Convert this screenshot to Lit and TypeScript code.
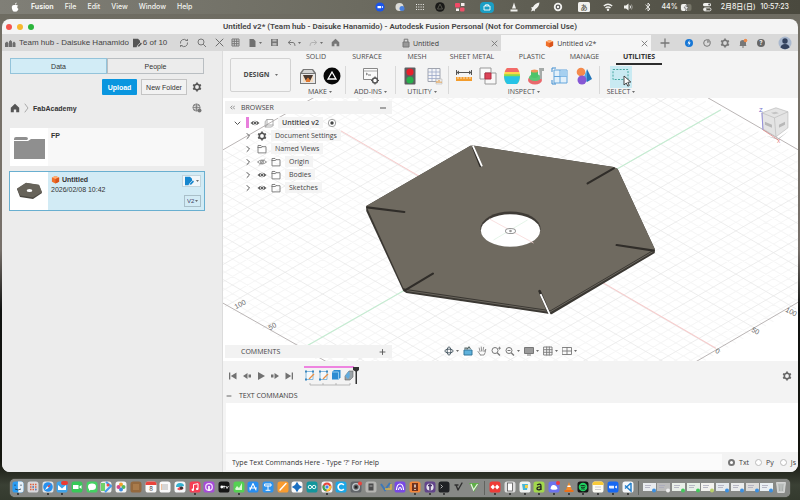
import { LitElement, html, svg, css, SVGTemplateResult } from "lit";
import { customElement, property } from "lit/decorators.js";
import { classMap } from "lit/directives/class-map.js";

type Art = SVGTemplateResult;
const icon = (art: Art, w = 10, h = w, box = `0 0 ${w} ${h}`) =>
  html`<svg width=${w} height=${h} viewBox=${box} aria-hidden="true">${art}</svg>`;

const line = (d: string, color = "#6d6d6d", w = 1) =>
  svg`<path d=${d} fill="none" stroke=${color} stroke-width=${w} stroke-linecap="round" stroke-linejoin="round"/>`;
const fill = (d: string, color = "#6d6d6d") => svg`<path d=${d} fill=${color}/>`;
const caret = svg`<path d="M0 0h3L1.500 2z" fill="#6d6d6d"/>`;

const gear = (c = "#555") => svg`
  <circle cx="5" cy="5" r="2.700" fill="none" stroke=${c} stroke-width="1.600"/>
  <path d="M5 .5v1.500M5 8v1.500M1.100 2.750l1.300.75M7.600 6.500l1.300.75M1.100 7.250l1.300-.75M7.600 3.500l1.300-.75" stroke=${c} stroke-width="1.700"/>`;
const eye = svg`<path d="M.5 5Q5 .5 9.500 5Q5 9.500 .5 5z" fill="#5c5c5c"/><circle cx="5" cy="5" r="1.900" fill="#fff"/><circle cx="5" cy="5" r="1.200" fill="#5c5c5c"/>`;
const eyeOff = svg`<path d="M.5 5Q5 1 9.500 5Q5 9 .5 5z" fill="none" stroke="#8a8a8a" stroke-width=".9"/><circle cx="5" cy="5" r="1.400" fill="none" stroke="#8a8a8a"/><path d="M2 8.500L8 1.500" stroke="#8a8a8a" stroke-width=".7"/>`;
const folderOutline = line("M1 8.500V1.500h3l1 1.200h4v5.800zM1 3.500h3.500l.8-.8", "#777", 0.9);
const home = (c = "#555") => fill("M5 .8L.8 4.700V9.300h3V6.500h2.400v2.800h3V4.700z", c);
const cube = svg`<path d="M1 2.800L5 1l4 1.800v4.700L5 9.500 1 7.500z" fill="#f0702a"/><path d="M1 2.800L5 4.500l4-1.700L5 1z" fill="#ffae72"/><path d="M5 4.500v5l4-2V2.800z" fill="#d9531b"/>`;
const edit = (c: string) => svg`<path d="M1 .8h5l2 2v2L5 8 4.600 9.300H1z" fill=${c}/><path d="M5.500 9.200l.4-1.900 3-3 1.400 1.400-3 3z" fill=${c} stroke="#eee" stroke-width=".5"/>`;

/* ---------- drawing area ---------- */
const O = [511, 230], U = [37.5, 21.7], V = [37.5, -21.4];
const at = (u: number, v: number) => `${O[0] + u * U[0] + v * V[0]} ${O[1] + u * U[1] + v * V[1]}`;
const gridLines = () => {
  const minor: string[] = [], major: string[] = [];
  for (let i = -27; i <= 27; i++) {
    const k = i / 5, set = i % 5 === 0 ? major : minor;
    set.push(`M${at(k, -5.6)}L${at(k, 5.6)}M${at(-5.6, k)}L${at(5.6, k)}`);
  }
  return svg`<path d=${minor.join("")} stroke="#f6f6f6" fill="none"/>
    <path d=${major.join("")} stroke="#e9e9e9" stroke-width=".8" fill="none"/>`;
};
const scene = svg`
  ${gridLines()}
  <g fill="none" stroke="#a9a3a3" stroke-width=".8">
    <path d="M224 303L330 363M690 365L800 301M708 98L800 151M224 150L316 97"/>
  </g>
  <path d="M340 130L716 348" stroke="#f6cccc"/><path d="M300 350L721 110" stroke="#c3ecd0"/>
  <g font-family="Liberation Sans, sans-serif" font-size="7" fill="#666">
    <text transform="translate(237 309) rotate(-28)">100</text>
    <text transform="translate(271 330) rotate(-28)">50</text>
    <text transform="translate(715 352) rotate(28)">0</text>
    <text transform="translate(751 331) rotate(28)">50</text>
    <text transform="translate(785 311) rotate(28)">100</text>
  </g>
  <path d="M367 206L471 146L475 146L614 167L618 169L655 249V253L552 314L407 293L404 291L367 211z" fill="#3a3732"/>
  <path d="M367 206L471 146L475 146L614 167L618 169L655 249L551 310L407 289L404 288z" fill="#6f6a60"/>
  <path d="M407 290.500L551 311.500L655 250.500" stroke="#8a857b" stroke-width=".6" fill="none"/>
  <ellipse cx="511" cy="229" rx="30" ry="17.500" fill="#3f3b36"/>
  <ellipse cx="511" cy="230.500" rx="29.600" ry="16.200" fill="#fff"/>
  <path d="M490 219L534 243" stroke="#f8d8d8" stroke-width=".8"/><path d="M494 240L528 220" stroke="#dff3e4" stroke-width=".8"/>
  <ellipse cx="511" cy="231" rx="5" ry="2.600" fill="#fff" stroke="#999"/><circle cx="511" cy="231" r="1.300" fill="#999"/>
  <g stroke-linecap="round" stroke="#302d29" stroke-width="2.200">
    <path d="M368 207.500L405 212M588 183.500L614 168.500M617 245L654 250.500M406 290L433.500 273.500"/>
    <path d="M474 148L481 166M540 291L549 312" stroke-width="2.600"/>
  </g>
  <path d="M473.500 146L482.500 166.500M541 294L550 314" stroke="#fff" stroke-width="1.800"/>
  <g>
    <path d="M766 136L778 140L789 131L778 139z" fill="#bbb"/>
    <path d="M762 113L776 108L788 112L788 128L776 137L763 129z" fill="#e4e4e4" stroke="#b5b5b5" stroke-width=".6"/>
    <path d="M762 113L774.500 118L788 112M774.500 118L776 137" stroke="#b5b5b5" fill="none" stroke-width=".6"/>
    <path d="M765 122l7 3v3l-7-3zM779 125l6-3v3l-6 3z" fill="#b8b8b8"/><path d="M771 113l5-1 3 1.500-5 1z" fill="#c4c4c4"/>
    <path d="M762 113L763 130" stroke="#8480dd" stroke-width=".8"/><path d="M763 130L778 140" stroke="#e08888" stroke-width=".8"/>
    <text x="759" y="112" font-size="6" fill="#7470cc" font-family="Liberation Sans, sans-serif">Z</text>
    <text x="777" y="143" font-size="5" fill="#dd7777" font-family="Liberation Sans, sans-serif">X</text>
  </g>`;

/* ---------- ribbon ---------- */
const tools = {
  print: svg`<path d="M1 6l3-4h10l3 4v11H1z" fill="#777"/><path d="M3 6l2-3h8l2 3z" fill="#d5d5d5"/><path d="M2 7h14v9H2z" fill="#e8e8e8"/><path d="M4 8h10v7H4z" fill="#4a3a32"/><path d="M4 8l3 6 2-3 2 3 3-6v7H4z" fill="#f6dcc0"/><path d="M7 13l2-2.500L11 13v2H7z" fill="#e07830"/>`,
  tri: svg`<circle cx="9" cy="9" r="8.500" fill="#080808"/><path d="M9 5l4 7H5z" fill="none" stroke="#fff" stroke-width="1.300"/>`,
  script: svg`<path d="M1.500 1.500h14v11h-14z" fill="#fafafa" stroke="#888"/><path d="M2 4h13" stroke="#aaa"/><path d="M4 6l1.500 1L4 8M6 8h3" stroke="#555" fill="none" stroke-width=".8"/><circle cx="13" cy="13.500" r="2.500" fill="#fff" stroke="#555" stroke-width="1.500"/><path d="M13 9.500v1.500M13 16v1.500M9 13.500h1.500M15.500 13.500h1.500" stroke="#555" stroke-width="1.200"/>`,
  light: svg`<rect x="3.500" y=".5" width="11" height="17" rx="1" fill="#5c5e60"/><circle cx="9" cy="5" r="3.600" fill="#e8202c"/><circle cx="9" cy="13" r="3.600" fill="#28b04c"/>`,
  sheet: svg`<path d="M3 1.500h12v13H3z" fill="#f4f5f8" stroke="#a0a4ae"/><path d="M3 5h12M3 8.500h12M3 11.500h12M7 2v12M11 2v12" stroke="#9ca8c8" stroke-width=".8"/><path d="M11 12h6v5h-6z" fill="#eee" stroke="#bbb" stroke-width=".6"/><path d="M12 16v-2M14 16v-3M16 16v-1.500" stroke="#e09030"/>`,
  measure: svg`<path d="M1.500 3v5M16.500 3v5M2 5.500h14" stroke="#555" fill="none"/><path d="M4 3.500L1.500 5.500 4 7.500zM14 3.500l2.500 2L14 7.500z" fill="#555"/><path d="M1 10h16v4H1z" fill="#f39c2c"/><path d="M3 10v2M6 10v2M9 10v2M12 10v2M15 10v2" stroke="#fff" stroke-width=".7"/>`,
  interfere: svg`<path d="M1 1h11v11H1z" fill="#fafafa" stroke="#999"/><path d="M6 6h11v11H6z" fill="#f8f8f8" stroke="#999"/><path d="M6 6h6v6H6z" fill="#dc4458" stroke="#b52e42"/>`,
  zebra: svg`<path d="M4 1h10q3 3 3 8t-3 8H4Q1 14 1 9t3-8z" fill="#ffd64a"/><path d="M4 1h10q1.500 1.500 2.200 4H1.800Q2.500 2.500 4 1z" fill="#f26a6a"/><path d="M1 9h16q0 5-3 8H4Q1 14 1 9z" fill="#27c3e6"/><path d="M1.200 7.300h15.600v1.900H1.200z" fill="#8adc4a"/>`,
  curv: svg`<ellipse cx="8" cy="13" rx="7" ry="4.500" fill="#e9686c"/><ellipse cx="8" cy="10.500" rx="6" ry="3.500" fill="#58c878"/><path d="M4 4q4-2 7 0v6q-3 2-7 0z" fill="#4cc46a"/><ellipse cx="7.500" cy="4" rx="3.500" ry="1.500" fill="#f0955a"/><path d="M12 1h5v3h-2v8h-2z" fill="#a5aaa8"/>`,
  section: svg`<path d="M3 3h13v13H3z" fill="#e2f0fa" stroke="#62a5dc"/><path d="M9 3v13M3 9.500h13" stroke="#62a5dc"/><path d="M9.500 3.500H16v6H9.500z" fill="#a6d0f0"/><path d="M1 5V1h4M1 13v4h4" stroke="#3c8cd0" fill="none"/>`,
  shapes: svg`<path d="M12 2l5 10-5 3z" fill="#2374b8"/><path d="M12 2L8 12l4 3z" fill="#53a8e4"/><circle cx="6" cy="5" r="4.300" fill="#f48a4c"/><circle cx="7" cy="13" r="4.500" fill="#8658d4"/>`,
  select: svg`<path d="M3 3.500h15v10H3z" fill="none" stroke="#46a8a2" stroke-dasharray="2 1.300"/><path d="M14 10v9l2.300-2 1.500 3.200 1.500-.7-1.500-3.200 3-.3z" fill="#fff" stroke="#333" stroke-width=".9"/>`,
};
const groups: { label: string; cls: string; items: [string, Art][] }[] = [
  { label: "MAKE", cls: "make", items: [["3D Print", tools.print], ["Make add-in", tools.tri]] },
  { label: "ADD-INS", cls: "addins", items: [["Scripts and Add-Ins", tools.script]] },
  { label: "UTILITY", cls: "utility", items: [["Status", tools.light], ["Parameters", tools.sheet]] },
  { label: "INSPECT", cls: "inspect", items: [["Measure", tools.measure], ["Interference", tools.interfere], ["Zebra", tools.zebra], ["Curvature", tools.curv], ["Section", tools.section], ["Color", tools.shapes]] },
];

@customElement("fusion-ribbon")
class FusionRibbon extends LitElement {
  static styles = css`
    :host { display: flex; background: #f4f4f4; height: 47px; padding-left: 7px; overflow: hidden; font: 7px/8px "Open Sans", "Noto Sans", sans-serif; color: #4a4a4a; }
    button { font: inherit; color: inherit; background: none; border: 0; padding: 0; white-space: nowrap; }
    svg { display: block; }
    .design { align-self: center; width: 61px; height: 34px; border: 1px solid #d2d2d2; border-radius: 2px; font-weight: 700; display: flex; align-items: center; justify-content: center; gap: 5px; flex: none; }
    .right { display: flex; flex-direction: column; margin-left: 4px; }
    nav { display: flex; height: 15px; }
    nav button { height: 12px; text-align: center; }
    .solid { width: 42px; } .surface { width: 60px; } .mesh { width: 40px; } .metal { width: 70px; }
    .plastic { width: 50px; } .manage { width: 55px; }
    .util { width: 46px; height: 14px; margin-left: 4px; border-bottom: 2px solid #2c2c2c; font-weight: 700; color: #333; }
    .groups { display: flex; }
    .group { display: flex; flex-direction: column; align-items: center; border-right: 1px solid #d9d9d9; height: 28px; }
    .tools { display: flex; gap: 6px; height: 18px; padding: 1px 0 3px; justify-content: center; }
    .make { width: 50px; } .addins { width: 49px; } .utility { width: 52px; } .inspect { width: 150px; } .select { width: 42px; border: 0; }
    .label { display: flex; align-items: center; gap: 2px; }
    .pick { background: #c9eaf2; width: 22px; height: 22px; }
  `;
  render() {
    const tabs = [["SOLID", "solid"], ["SURFACE", "surface"], ["MESH", "mesh"], ["SHEET METAL", "metal"], ["PLASTIC", "plastic"], ["MANAGE", "manage"], ["UTILITIES", "util"]];
    return html`
      <button class="design">DESIGN ${icon(caret, 3, 2)}</button>
      <div class="right">
        <nav>${tabs.map(([t, c]) => html`<button class=${c}>${t}</button>`)}</nav>
        <div class="groups">
          ${groups.map((g) => html`<div class="group ${g.cls}">
            <div class="tools">${g.items.map(([n, a]) => html`<button aria-label=${n}>${icon(a, 18)}</button>`)}</div>
            <button class="label">${g.label} ${icon(caret, 3, 2)}</button>
          </div>`)}
          <div class="group select">
            <button class="pick" aria-label="Select">${icon(tools.select, 22)}</button>
            <button class="label">SELECT ${icon(caret, 3, 2)}</button>
          </div>
        </div>
      </div>`;
  }
}

/* ---------- data panel ---------- */
@customElement("data-panel")
class DataPanel extends LitElement {
  static styles = css`
    :host { display: block; flex: 0 0 221px; box-sizing: border-box; background: #ececec; padding: 7px 18px 0 8px; border-right: 1px solid #dcdcdc; font: 7px/9px "Liberation Sans", Arial, sans-serif; color: #333; }
    button, select { font: inherit; color: inherit; background: none; border: 0; padding: 0; }
    svg { display: block; }
    .tabs { display: grid; grid-template-columns: 1fr 1fr; height: 16px; }
    .tabs button { border: 1px solid #b9bec2; }
    .tabs .on { background: #d2ecf6; border-color: #93c3da; }
    .actions { display: flex; justify-content: flex-end; align-items: center; gap: 4px; height: 16px; margin-top: 5px; }
    .upload { background: #0a96df; color: #fff; font-weight: 700; width: 35px; height: 16px; border-radius: 1px; }
    .new { border: 1px solid #c4c4c4; width: 46px; height: 16px; background: #f2f2f2; }
    .gear { padding: 0 2px 0 1px; }
    .path { display: flex; align-items: center; gap: 4px; height: 10px; margin: 8px 2px 15px 0; }
    .path a { color: #333; text-decoration: none; font-weight: 700; }
    .globe { margin-left: auto; }
    .card { display: flex; background: #f8f8f8; height: 38px; margin-bottom: 6px; }
    .thumb { background: #fff; width: 38px; display: grid; place-items: center; }
    .body { flex: 1; padding: 2px 3px; display: flex; justify-content: space-between; }
    .name { display: flex; align-items: center; gap: 2px; font-weight: 700; height: 10px; }
    .date { margin-top: 1px; }
    .sel { background: #d2ebf5; box-shadow: 0 0 0 1px #69afd0; }
    .side { display: flex; flex-direction: column; justify-content: space-between; align-items: flex-end; padding: 1px 0; }
    .ed { width: 19px; height: 12px; background: #f1f7fa; border: 1px solid #c3d5dd; display: flex; align-items: center; justify-content: center; gap: 2px; }
    .ver { width: 15px; height: 10px; border: 1px solid #a9bfc9; display: flex; align-items: center; justify-content: center; color: #446; font-size: 6px; }
    .ver select { appearance: none; }
  `;
  render() {
    return html`
      <div class="tabs"><button class="on">Data</button><button>People</button></div>
      <div class="actions"><button class="upload">Upload</button><button class="new">New Folder</button>
        <button class="gear" aria-label="Settings">${icon(gear())}</button></div>
      <div class="path"><a href="#home" aria-label="Home">${icon(home())}</a>${icon(line("M1 1l3 4-3 4", "#aaa"), 5, 10)}
        <a href="#fab">FabAcademy</a>
        <span class="globe">${icon(svg`<circle cx="4.500" cy="4.500" r="3.600" fill="none" stroke="#777" stroke-width=".9"/><path d="M1 4.500h7M4.500 1v7M2 2.500q2.500 1.500 5 0M2 6.500q2.500-1.500 5 0" stroke="#777" fill="none" stroke-width=".8"/><circle cx="7.500" cy="7.500" r="2" fill="#777"/>`)}</span></div>
      <div class="card"><div class="thumb">${icon(fill("M0 3q0-2 2-2h10q2 0 2 2l-1 1H0zM0 5h14l3-2h14v20H0z", "#8f8f8f"), 31, 23)}</div>
        <div class="body"><span class="name">FP</span></div></div>
      <div class="card sel"><div class="thumb">${icon(svg`<path d="M1 7L10 1l13 2 3 8-9 6-13-2z" fill="#4b4842"/><path d="M1 6.500L10 .8l13 2 3 7.200-9 5.500-13-2z" fill="#67635a"/><ellipse cx="13.500" cy="8.500" rx="2.800" ry="1.600" fill="#fff"/>`, 27, 18)}</div>
        <div class="body"><div><span class="name">${icon(cube, 9, 9, "0 0 10 10")}Untitled</span><div class="date">2026/02/08 10:42</div></div>
          <div class="side"><button class="ed" aria-label="Open for edit">${icon(edit("#1687cf"), 10)}${icon(caret, 3, 2)}</button>
            <label class="ver"><select aria-label="Version"><option>V2</option></select>${icon(caret, 3, 2)}</label></div>
        </div></div>`;
  }
}

/* ---------- viewport ---------- */
@customElement("model-view")
class ModelView extends LitElement {
  static styles = css`
    :host { display: block; position: relative; flex: 1; min-height: 200px; background: #fff; overflow: hidden; font: 7px/9px "Open Sans", "Noto Sans", sans-serif; color: #444; }
    svg { display: block; }
    button { font: inherit; color: inherit; background: none; border: 0; padding: 0; display: block; }
    .scene { position: absolute; inset: 0; width: 100%; height: 100%; }
    .browser { position: absolute; left: 2px; top: 3px; width: 167px; }
    .comments { position: absolute; left: 2px; bottom: 3px; width: 167px; }
    .bar { display: flex; align-items: center; background: #f2f2f2; height: 13px; padding: 0 6px 0 5px; box-sizing: border-box; gap: 6px; }
    .bar span { flex: 1; } .comments .bar { padding-left: 16px; }
    ul { list-style: none; margin: 2px 0 0; padding: 0 0 0 8px; display: grid; grid-auto-rows: 13px; }
    li { display: flex; align-items: center; gap: 4px; }
    li + li { padding-left: 10px; }
    .vis { display: flex; align-items: center; gap: 1px; }
    .name { background: #f4f4f4; padding: 0 4px; height: 11px; line-height: 11px; }
    b.name { font-weight: 600; }
    .pink { width: 3px; height: 11px; background: #e87fdc; }
    .nav { position: absolute; left: 0; right: 0; bottom: 5px; width: fit-content; margin: 0 auto; display: flex; align-items: center; gap: 4px; background: #fafafa; height: 11px; }
    .drop { display: flex; align-items: center; gap: 2px; }
  `;
  render() {
    const rows: [Art[], string][] = [
      [[gear("#555")], "Document Settings"], [[folderOutline], "Named Views"],
      [[eyeOff, folderOutline], "Origin"], [[eye, folderOutline], "Bodies"], [[eye, folderOutline], "Sketches"]];
    const drop = (label: string, a: Art) => html`<button class="drop" aria-label=${label}>${icon(a)}${icon(caret, 3, 2)}</button>`;
    const mag = svg`<circle cx="4" cy="4.500" r="3" fill="none" stroke="#777"/><path d="M6.200 6.700L9 9.500" stroke="#777" stroke-width="1.300"/>`;
    return html`
      <svg class="scene" viewBox="224 98 574 263" preserveAspectRatio="xMidYMid slice" role="img" aria-label="Hexagonal plate">${scene}</svg>
      <section class="browser">
        <div class="bar">${icon(line("M2 1L.7 2.500 2 4M4.500 1L3.200 2.500 4.500 4", "#777", 0.8), 5)}<span>BROWSER</span><button aria-label="Collapse">${icon(line("M0 4h6", "#555"), 6, 8)}</button></div>
        <ul>
          <li>${icon(line("M2 4l2.500 2.500L7 4", "#555"), 9, 10)}<span class="vis"><i class="pink"></i>${icon(eye)}</span>${icon(line("M1.500 3l1.500-1.500h6v6L7.500 9h-6zM3 1.500v5.500h6M3 7L1.500 9", "#999", 0.8))}<b class="name">Untitled v2</b>${icon(svg`<circle cx="5" cy="5" r="3.700" fill="#fff" stroke="#888" stroke-width=".8"/><circle cx="5" cy="5" r="1.700" fill="#444"/>`)}</li>
          ${rows.map(([a, n]) => html`<li>${icon(line("M4 2.500L6.500 5 4 7.500", "#555"))}${a.map((x) => icon(x))}<span class="name">${n}</span></li>`)}
        </ul>
      </section>
      <section class="comments"><div class="bar"><span>COMMENTS</span><button aria-label="Add comment">${icon(line("M1 4h5M3.500 1.500v5", "#555", 0.9), 7, 8)}</button></div></section>
      <div class="nav">
        ${drop("Orbit", svg`<ellipse cx="5" cy="5" rx="4.200" ry="1.900" fill="none" stroke="#51606a"/><ellipse cx="5" cy="5" rx="1.900" ry="4.200" fill="none" stroke="#51606a"/>`)}
        <button aria-label="Look at">${icon(svg`<path d="M1 4h8v5H1z" fill="#5fb2dc" stroke="#33769b"/><path d="M2 3.500V2h2v1.500M4.500 3l1.500-2 1.500 2" fill="none" stroke="#566" stroke-width="1.100"/>`)}</button>
        <button aria-label="Pan">${icon(line("M3.500 9L1 5.500M3 5.500L2.200 2M4.500 5L4.300 1M6 5l.6-3.700M7 5.700L8.800 3Q8.500 7 7 9H3.500", "#888", 0.9))}</button>
        <button aria-label="Zoom">${icon(svg`${mag}<path d="M7 2.200h3M8.500.7v3" stroke="#777" stroke-width=".8"/>`)}</button>
        ${drop("Fit", svg`${mag}<path d="M2.500 4.500h3" stroke="#777"/>`)}
        ${drop("Display", svg`<path d="M.5 1.500h9v6h-9z" fill="#9a9a9a" stroke="#777"/><path d="M3 9h4" stroke="#777"/>`)}
        ${drop("Grid", line("M1 1h8v8H1zM1 3.700h8M1 6.300h8M3.700 1v8M6.300 1v8", "#777", 0.9))}
        ${drop("Viewports", line("M.5 1.500h9v7h-9zM.5 5h9M5 1.500v7", "#777", 0.9))}
      </div>`;
  }
}

/* ---------- dock ---------- */
const g = {
  dots: (c: string) => svg`<path d="M3 3.500h1.500M5.500 3.500h1.500M8 3.500h1.500M3 6h1.500M5.500 6h1.500M8 6h1.500M3 8.500h1.500M5.500 8.500h1.500M8 8.500h1.500" stroke=${c} stroke-width="1.500"/>`,
  ring: (c: string) => svg`<circle cx="6" cy="6" r="3.300" fill="none" stroke=${c} stroke-width="1.300"/>`,
  disc: (c: string) => svg`<circle cx="6" cy="6" r="3.600" fill=${c}/>`,
  lines: (c: string) => svg`<path d="M3 4h6M3 6h6M3 8h6" stroke=${c} stroke-width=".9"/>`,
};
const apps: [string, Art, boolean?][] = [
  ["#2b9cf2", svg`<path d="M6 .5h3q2.500 0 2.500 2.500v6q0 2.500-2.500 2.500H6.500Q5.500 8 6 .5z" fill="#e6f0f8"/><path d="M3 3.500v1.500M9 3.500v1.500M3 8q3 2 6 0" stroke="#234" fill="none" stroke-width=".8"/>`, true],
  ["#d8d8dc", svg`${g.dots("#e0603c")}<path d="M5.500 6H7M8 8.500h1.500" stroke="#3c8ce0" stroke-width="1.500"/>`],
  ["#dfe6ec", svg`<circle cx="6" cy="6" r="4.800" fill="#2690ee"/><path d="M9 3L6.800 6.800 5.200 5.200z" fill="#e44"/><path d="M3 9l2.200-3.800 1.600 1.600z" fill="#fff"/>`, true],
  ["#3fa4ea", svg`<path d="M2 4l4 3.500L10 4v5H2z" fill="#fff"/><rect x="5" y="0" width="7" height="4" rx="2" fill="#ea3a33"/>`, true],
  ["#38c858", fill("M2 4h5.500v4H2zM8 6l2.500-2v4z", "#fff")],
  ["#44d162", svg`<ellipse cx="6" cy="5.700" rx="4" ry="3.200" fill="#fff"/><path d="M3 7.500v2.200L5.500 8.500z" fill="#fff"/>`],
  ["#eceff0", svg`<path d="M1 2h4v8H1z" fill="#6ed26a"/><path d="M6 1l5 4-6 6" stroke="#459cf0" stroke-width="2" fill="none"/><circle cx="8" cy="4" r="1.500" fill="#eb5048"/>`],
  ["#f6f6f6", svg`<circle cx="6" cy="3.500" r="2" fill="#f3a02c"/><circle cx="8.500" cy="6" r="2" fill="#58b85a"/><circle cx="6" cy="8.500" r="2" fill="#3a8ce0"/><circle cx="3.500" cy="6" r="2" fill="#d3488c"/>`],
  ["#94693e", svg`<path d="M3 3h6v6H3z" fill="#a97b4b"/>`],
  ["#fafafa", svg`<path d="M.5 3q0-2.500 2.500-2.500h6q2.500 0 2.500 2.500v1H.5z" fill="#e8443c"/><text x="6" y="10" text-anchor="middle" font-size="6" font-family="Inter, sans-serif" fill="#333">8</text>`],
  ["#fafafa", svg`${g.lines("#aaa")}<path d="M2.500 3.500v5" stroke="#e8863a" stroke-dasharray="1 1"/>`],
  ["#f5f8fa", svg`<path d="M2 6q0-4 4-4t4 3l-4 1z" fill="#35b1d0"/><path d="M3 8q3 3 7-1L6 5.500z" fill="#e8545c"/><circle cx="7.500" cy="7" r="1.600" fill="#333"/>`],
  ["#f53e55", svg`<path d="M4.500 8.500V3.500L9 2.700v5" stroke="#fff" fill="none"/><circle cx="3.800" cy="8.700" r="1.200" fill="#fff"/><circle cx="8.200" cy="7.900" r="1.200" fill="#fff"/>`, true],
  ["#a64bd8", svg`${g.ring("#f2defc")}<path d="M6 5v5" stroke="#fff" stroke-width="1.700"/>`],
  ["#151515", svg`<circle cx="3.800" cy="6" r="1.400" fill="#fff"/><path d="M6 4.500v3M5 5.500h2.500M8 5l1 2.500L10.500 5" stroke="#fff" fill="none" stroke-width=".8"/>`],
  ["#55d052", svg`<path d="M2 8l2-3 2 2 3-5v7H3z" fill="#d9fad3"/>`, true],
  ["#268df0", line("M6 2.500L3 9M6 2.500L9 9M2.500 7h7", "#fff", 1.1)],
  ["#2c93ee", line("M3 3h6v2H3zM6 5v4M4 9.300h4", "#fff", 1)],
  ["#f89b30", line("M3 9L9 2.500", "#fff", 1.4)],
  ["#fbfbfb", svg`<path d="M6 .8L8 4l3.200 2L8 8 6 11.200 4 8 .8 6 4 4z" fill="#1a6fc0"/>`],
  ["#13969c", svg`<circle cx="3.900" cy="6" r="1.700" fill="none" stroke="#e6fbfb"/><circle cx="8.100" cy="6" r="1.700" fill="none" stroke="#e6fbfb"/>`],
  ["#f4f4f4", svg`<circle cx="6" cy="6" r="4.500" fill="#e8473c"/><path d="M6 6L2 4a4.500 4.500 0 0 0 3.500 6.500z" fill="#38a852"/><path d="M6 6l-.5 4.500A4.500 4.500 0 0 0 10 4.500z" fill="#fbc52c"/><circle cx="6" cy="6" r="2" fill="#3f83ee" stroke="#fff" stroke-width=".7"/>`, true],
  ["#1ba7e6", svg`<path d="M8.800 4A3.200 3.200 0 1 0 8.800 8" stroke="#fff" fill="none" stroke-width="1.600"/>`],
  ["#606468", svg`${g.ring("#c2c7ca")}<circle cx="6" cy="6" r="1.500" fill="#222"/><circle cx="10" cy="2.500" r="2" fill="#e9443c"/>`],
  ["#b5b5b2", svg`<rect x="3.500" y="2.500" width="5" height="7" fill="#4b4b4b"/><path d="M4.500 5h3" stroke="#aaa"/>`],
  ["transparent", svg`<path d="M1 3l4 6 5-7" stroke="#3c78b8" stroke-width="2" fill="none"/><path d="M5 8h6V3" stroke="#d7b34a" stroke-width="1.500" fill="none"/>`],
  ["#7849e4", line("M2.500 8.500Q3 3 6 3t3.500 5.500M4.500 8.500Q6 4 7.500 8.500", "#fff", 1.2)],
  ["#f2863a", svg`<path d="M3 2h6v8H3z" fill="#70311c"/><path d="M6 3.500v3M6 8v1" stroke="#fff" stroke-width="1.300"/>`, true],
  ["#62458b", svg`${g.disc("#e9e5f0")}<path d="M6 2.500v7M4 4.500h4" stroke="#443066" stroke-width="1.500"/>`, true],
  ["#202225", line("M3 4l1.500 1.500L3 7", "#ddd", 0.8), true],
  ["transparent", line("M3 4l2 5 4-7M2 4h3", "#303030", 1.4)],
  ["transparent", svg`<path d="M1 2h10L6 11z" fill="#5fae48"/><path d="M3 3l2.500 6L9.500 3" stroke="#e8f4e4" stroke-width="1.300" fill="none"/>`],
];
const recent: [string, Art, boolean?][] = [
  ["#ee3b36", fill("M1.500 6L4 3.500 6 6 4 8.500zM6 6l2-2.500L10.500 6 8 8.500z", "#fff"), true],
  ["#dedede", svg`<rect x="3.500" y="2" width="5" height="8" fill="#fff" stroke="#555" stroke-width=".8"/>`, true],
  ["#eff3f2", svg`<path d="M3 3h6l-1 6H4z" fill="#49b6d6"/><path d="M6 4h3v3H6z" fill="#efcf4a"/>`, true],
  ["#a2d84c", svg`<path d="M4 4q4-2 4 1v4M8 6Q3.500 5.500 4 8q2 2 4-.5" stroke="#222" stroke-width="1.300" fill="none"/>`, true],
  ["#6b72ee", svg`<path d="M2.500 8Q3 3.500 6 4t3.500 4l-2 .8h-3z" fill="#fff"/><circle cx="10" cy="2" r="2" fill="#ee3a3f"/>`, true],
  ["transparent", svg`<path d="M6 1l3 8H3z" fill="#f48b26"/><path d="M4.700 4.500h2.600l.5 1.600H4.200z" fill="#fff"/><path d="M1.500 9h9v2h-9z" fill="#e7701c"/>`, true],
  ["#141414", svg`<circle cx="6" cy="6" r="4.300" fill="#20cf60"/><path d="M3.500 4.800q2.500-1 5 .3M4 6.500q2-.8 4 .3M4.300 8q1.700-.6 3.200.3" stroke="#111" fill="none" stroke-width=".8"/>`, true],
  ["#fbfbf4", svg`<path d="M.5 3q0-2.500 2.500-2.500h6q2.500 0 2.500 2.500v1H.5z" fill="#f8ca38"/><path d="M3 6h6M3 8.500h6" stroke="#ccc"/>`, true],
  ["#1768f2", svg`<path d="M2 4.800h5v2.800H3q-1 0-1-1zM8 5.500l2-1v3l-2-1z" fill="#e8f0ff"/>`, true],
  ["#f4f7fa", svg`<path d="M9 2v8L3 4.500M9 2L3 7.500" stroke="#2480cc" fill="none" stroke-width="1.500"/>`, true],
];
const minis = [["#e8ebee", "#3b8fe0"], ["#bcbcbc", "#eee"], ["#e9efe8", "#43c75c"], ["#e6efe7", "#43c75c"], ["#f2f2ee", "#b8d068"], ["#e4e9ed", "#3b8fe0"], ["#eaecec", "#3b8fe0"], ["#dddddb", "#3b8fe0"], ["#eaf0f4", "#3b8fe0"]];

@customElement("app-dock")
class AppDock extends LitElement {
  static styles = css`
    :host { display: flex; align-items: center; height: 18px; margin: 7px 10px 3px; padding: 0 1px; background: #878986; border-radius: 5px; box-shadow: 0 0 1px #b7b7b2; }
    button { flex: 1; background: none; border: 0; padding: 0; display: grid; justify-items: center; grid-template-rows: 12px 2px; }
    i { width: 1px; height: 14px; margin: 0 3px; background: #61635f; }
    svg { display: block; }
  `;
  render() {
    const app = ([bg, art, run]: [string, Art, boolean?]) => html`<button aria-label="App">${icon(svg`<rect x=".5" y=".5" width="11" height="11" rx="2.600" fill=${bg}/>${art}`, 12)}${run ? icon(svg`<circle cx="1" cy="1" r=".9" fill="#1d1d1d"/>`, 2) : ""}</button>`;
    return html`${apps.map(app)}<i></i>${recent.map(app)}<i></i>
      ${minis.map(([a, b]) => html`<button aria-label="Window">${icon(svg`<rect y="2" width="13" height="8" fill=${a}/><path d="M2 4.500h6M2 6.500h5" stroke="#aab" stroke-width=".8"/><circle cx="11" cy="9.500" r="2" fill=${b}/>`, 13, 12)}</button>`)}
      <button aria-label="Trash">${icon(svg`<path d="M1.500 1.500h9L9.300 11.500H2.700z" fill="#c9cccb" stroke="#e6e6e6" stroke-width=".7"/><path d="M4 3l.6 7M6 3v7M8 3l-.6 7" stroke="#9a9d9c" stroke-width=".7"/>`, 12)}</button>`;
  }
}

/* ---------- menu bar ---------- */
@customElement("menu-bar")
class MenuBar extends LitElement {
  static styles = css`
    :host { display: flex; align-items: center; height: 14px; padding: 0 11px 0 10px; color: #f4f4f0; font: 500 7px/10px Inter, "Noto Sans CJK JP", sans-serif; background: linear-gradient(90deg, #807f77, #6c6b60 45%, #4a493e); margin-bottom: 5px; white-space: nowrap; }
    svg { display: block; }
    nav { display: flex; gap: 11px; align-items: center; }
    button { font: inherit; color: inherit; background: none; border: 0; padding: 0; }
    .app { font-weight: 700; }
    .status { margin-left: auto; display: flex; gap: 8px; align-items: center; }
    .s { display: grid; place-items: center; width: 12px; }
    .w14 { width: 14px; } .w16 { width: 16px; } .w20 { width: 20px; } .w26 { width: 26px; }
    .bat { display: flex; align-items: center; gap: 2px; }
    .clock { display: flex; gap: 5px; }
  `;
  render() {
    const w = "#f1f1ee";
    const s = (a: Art, c = "") => html`<span class="s ${c}">${icon(a)}</span>`;
    return html`
      <nav><span>${icon(svg`<path d="M7 3.200Q6 2.600 5 3.100 3.800 2.600 2.700 3.300 1.200 4.500 2 7t2 2.700q1-.5 2 0 1.400-.2 2.500-2.800Q7 6 7.200 5T8.300 3.700Q7.800 3.200 7 3.200z" fill="#fff"/><path d="M5 2.700Q5 .9 6.700.5 6.700 2.300 5 2.700z" fill="#fff"/>`)}</span>
        <button class="app">Fusion</button>${["File", "Edit", "View", "Window", "Help"].map((m) => html`<button>${m}</button>`)}</nav>
      <div class="status">
        ${s(svg`<circle cx="5" cy="5" r="4.600" fill="#1b55e8"/><path d="M2.500 4h3.500v2.300H2.500zM6.500 4.800l1.500-.8v2l-1.500-.7z" fill="#fff"/>`)}
        ${s(svg`<circle cx="4.500" cy="5" r="4" fill="#dcdcd8"/><circle cx="7" cy="6.500" r="2.500" fill="#4a80dc"/>`)}
        ${s(svg`<path d="M1 2.500h8M1 5h8M1 7.500h8" stroke=${w} stroke-dasharray="1 1.300"/>`)}
        ${s(svg`<circle cx="5" cy="5" r="4.800" fill="#191917"/><path d="M5 2l2.500 5h-5z" fill="none" stroke="#55554c"/>`)}
        ${s(svg`<rect x="0" y="1" width="5" height="4.500" rx="1" fill="#f04a66"/><path d="M6 1h3.500v3H6zM1 6.500h3V9H1z" fill="#f6eeee"/><rect x="5" y="5.500" width="4.500" height="4" rx="1" fill="#ee5068"/>`)}
        ${html`<span class="s w26">${icon(svg`<rect width="14" height="11" rx="4" fill="#1b9ec4"/><path d="M4 4h6v4H4zM5.500 4V2.800h3V4" fill="none" stroke="#fff" stroke-width=".9"/>`, 14, 11)}</span>`}
        ${s(fill("M5 .5l2 6H3zM1.500 7.500h7v2h-7z", w))}
        ${s(fill("M9.500 .5Q5 1 3 5L1 5.500 2 7l-1 2.500L3.500 8.500 4.500 9.500 5.200 7.200Q9 5 9.500 .5z", w), "w14")}
        ${s(svg`<circle cx="5" cy="5" r="4.200" fill=${w}/><circle cx="5" cy="5" r="1.800" fill="none" stroke="#555" stroke-width="1.200"/>`, "w16")}
        ${html`<span class="s w20">${icon(svg`<rect width="12" height="10" rx="1.500" fill="#f1f1ee"/><text x="6" y="8" text-anchor="middle" font-size="7" fill="#55554b" font-family="Noto Sans CJK JP, sans-serif">あ</text>`, 12, 10)}</span>`}
        ${s(svg`<path d="M.8 4Q5 .3 9.200 4M2.500 6Q5 3.800 7.500 6" fill="none" stroke=${w} stroke-width="1.400"/><circle cx="5" cy="7.800" r="1.200" fill=${w}/>`)}
        ${s(svg`<path d="M1 3.500h2L5.500 1.500v7L3 6.500H1z" fill=${w}/><path d="M7 3.500q1 1.500 0 3" fill="none" stroke=${w}/><path d="M8.500 2.500q1.500 2.500 0 5" fill="none" stroke="#9c9c94"/>`)}
        ${s(line("M2.800 3L7 7 5 9V1l2 2-4.200 4", w, 0.9))}
        <span class="bat">44% ${icon(svg`<rect x=".5" y="1" width="11" height="7" rx="2" fill="#777669"/><path d="M1 3q0-2 2-2h4v7H3Q1 8 1 6z" fill=${w}/><path d="M7 .8L4 5h2l-.7 3.300L8.500 4H6.500z" fill="#fff" stroke="#444" stroke-width=".5"/>`, 13, 9)}</span>
        ${s(svg`<rect x="1" y="1" width="8" height="3.300" rx="1.600" fill=${w}/><rect x="1.500" y="5.900" width="7.500" height="3" rx="1.500" fill="none" stroke=${w} stroke-width=".9"/><circle cx="3" cy="7.400" r="1.400" fill=${w}/><circle cx="7.200" cy="2.600" r="1" fill="#555"/>`)}
        <span class="clock"><span>2月8日(日)</span><time>10:57:23</time></span>
      </div>`;
  }
}

/* ---------- page ---------- */
@customElement("app-root")
class AppRoot extends LitElement {
  @property() mode = "Txt";
  static styles = css`
    :host { display: flex; flex-direction: column; min-height: 100vh; background: linear-gradient(180deg, #6b6a60, #777268 12%, #77706a 50%, #101210 62%, #15160f 92%, #3a4034 97%, #343a2e); font: 7px/9px "Open Sans", "Noto Sans", sans-serif; color: #3c3c3c; overflow: hidden; }
    button, input, textarea { font: inherit; color: inherit; background: none; border: 0; padding: 0; margin: 0; }
    button { display: block; }
    svg { display: block; }
    .window { flex: 1; display: flex; flex-direction: column; margin: 0 2px; border-radius: 8px; background: #f4f4f4; overflow: hidden; }
    .title { height: 15px; display: flex; align-items: center; position: relative; }
    .lights { display: flex; gap: 5px; padding-left: 4px; position: absolute; }
    .title h1 { flex: 1; text-align: center; margin: 0; font: 600 8px/10px Roboto, sans-serif; color: #454545; }
    .strip { display: flex; height: 17px; background: #d9d9d9; align-items: center; }
    .hub { flex: 0 0 221px; box-sizing: border-box; display: flex; align-items: center; padding: 0 4px 0 3px; gap: 8px; font: 8px/10px "Liberation Sans", Arial, sans-serif; color: #444; }
    .team { display: flex; align-items: center; gap: 3px; flex: 1; white-space: nowrap; min-width: 0; padding-right: 4px; }
    .team .t { overflow: hidden; flex: 1; }
    .team .count { display: flex; align-items: center; }
    .cmds { flex: 0 0 122px; box-sizing: border-box; display: flex; align-items: center; gap: 8px; padding-left: 3px; }
    .drop { display: flex; align-items: center; gap: 2px; }
    .tab { flex: 1; height: 16px; align-self: flex-end; display: flex; align-items: center; }
    .tab span { flex: 1; display: flex; justify-content: center; align-items: center; gap: 3px; }
    .tab button { margin-right: 3px; }
    .on { background: #f6f6f6; }
    .user { flex: 0 0 147px; display: flex; align-items: center; justify-content: flex-end; gap: 8px; padding-right: 6px; box-sizing: border-box; }
    .user .sp { margin-right: 6px; }
    .user .me { margin-left: 4px; }
    .main { display: flex; flex: 1; }
    .right { flex: 1; display: flex; flex-direction: column; min-width: 0; }
    .time { height: 27px; display: flex; align-items: center; gap: 4px; padding: 2px 6px 0 5px; box-sizing: border-box; background: #f3f3f3; }
    .hist { margin-left: 6px; } .end { margin-left: auto; }
    .tc { display: flex; align-items: center; height: 15px; gap: 7px; padding-left: 3px; background: #f3f3f3; }
    textarea { resize: none; height: 49px; margin: 0 0 0 3px; background: #fff; display: block; box-sizing: border-box; outline: none; }
    .cmd { display: flex; align-items: center; height: 20px; background: #f3f3f3; padding: 0 2px 0 3px; gap: 6px; }
    .cmd .in { flex: 1; height: 16px; background: #fbfbfb; padding-left: 6px; font-weight: 500; }
    .in::placeholder { color: #333; opacity: 1; }
    .cmd label { display: flex; align-items: center; gap: 4px; }
    .cmd label input { appearance: none; width: 7px; height: 7px; box-sizing: border-box; border: 1px solid #bbb; border-radius: 50%; background: #fff; }
    .cmd label input:checked { border: 2px solid #777; }
  `;
  render() {
    const mag = svg`<circle cx="4" cy="4" r="3" fill="none" stroke="#777"/><path d="M6.200 6.200L9 9" stroke="#777"/>`;
    const x = icon(line("M1 1l5 5M6 1L1 6", "#777", 0.9), 7);
    const play = "#717171";
    const steps: [string, Art][] = [
      ["Start", fill("M1 1.500h1.300v7H1zM8.500 1.500v7L2.800 5z", play)], ["Back", fill("M5.500 2v6L1 5zM6.500 3.500H9v3H6.500z", play)],
      ["Play", fill("M2 1l7 4-7 4z", play)], ["Forward", fill("M4.500 2v6L9 5zM1 3.500h2.500v3H1z", play)], ["End", fill("M7.700 1.500H9v7H7.700zM1.500 1.500v7L7.200 5z", play)]];
    return html`
      <menu-bar></menu-bar>
      <div class="window">
        <header class="title">
          <div class="lights">${["#f4544d", "#f7b82e", "#2bb53c"].map((c) => icon(svg`<circle cx="3" cy="3" r="3" fill=${c}/>`, 6))}</div>
          <h1>Untitled v2* (Team hub - Daisuke Hanamido) - Autodesk Fusion Personal (Not for Commercial Use)</h1>
        </header>
        <div class="strip">
          <div class="hub"><div class="team">${icon(svg`<path d="M0 9V5l2-1.500L3.500 5v4zM4 9V3.500L5.500 2 7 3.500V9zM7.500 9V5L9 3.500 10.500 5v4z" fill="#6d6d6d"/>`, 11, 10)}<span class="t">Team hub - Daisuke Hanamido</span><span class="count">${icon(edit("#555"), 11, 10)}6 of 10</span></div>
            <button aria-label="Refresh">${icon(svg`<path d="M1.500 5.500A3.500 3.500 0 0 1 7.500 2.500M8.500 4.500A3.500 3.500 0 0 1 2.500 7.500" stroke="#777" fill="none"/><path d="M6 3h3V.8zM4 7H1v2.200z" fill="#777"/>`)}</button>
            <button aria-label="Search">${icon(mag)}</button><button aria-label="Close panel">${icon(line("M1 1l7 7M8 1L1 8"), 9)}</button></div>
          <div class="cmds">
            <button aria-label="Apps">${icon(svg`<path d="M1 1h7v7H1zM1 3.300h7M1 5.700h7M3.300 1v7M5.700 1v7" fill="none" stroke="#777"/>`, 9)}</button>
            <button class="drop" aria-label="File">${icon(fill("M1.500 1h4l2 2v6h-6z", "#707070"), 9, 10)}${icon(caret, 3, 2)}</button>
            <button aria-label="Save">${icon(svg`<path d="M1 1h7v7H1z" fill="#777"/><path d="M2.500 1.500h4v2h-4zM2.500 5h4v2.500h-4z" fill="#bbb"/>`, 9)}</button>
            <button class="drop" aria-label="Undo">${icon(line("M3.500 1.500L1.200 3.500l2.300 2M1.500 3.500H6q2 0 2 3", "#777"), 9, 8)}${icon(caret, 3, 2)}</button>
            <button class="drop" aria-label="Redo">${icon(line("M5.500 1.500l2.300 2-2.300 2M7.500 3.500H3q-2 0-2 3", "#b2b2b2"), 9, 8)}${icon(caret, 3, 2)}</button>
            <button aria-label="Home">${icon(home("#777"), 9, 9, "0 0 10 10")}</button>
          </div>
          <div class="tab"><span>${icon(svg`<path d="M1 4h6v5H1z" fill="#999" stroke="#777"/><path d="M2.200 4V1.200h3.600V4" fill="none" stroke="#777"/>`, 8, 10)}Untitled</span><button aria-label="Close tab">${x}</button></div>
          <div class="tab on"><span>${icon(cube, 9, 9, "0 0 10 10")}Untitled v2*</span><button aria-label="Close tab">${x}</button></div>
          <div class="user">
            <button class="sp" aria-label="New tab">${icon(line("M1 5h8M5 1v8", "#777", 1.3))}</button>
            <button aria-label="Extensions">${icon(svg`<circle cx="5" cy="5" r="4" fill="#1777d6"/><path d="M5.500 2L3.500 5.500H5L4.500 8l2.200-3.500H5.300z" fill="#fff"/>`)}</button>
            <button aria-label="Jobs">${icon(svg`<circle cx="5" cy="5" r="3.300" fill="none" stroke="#777"/><path d="M5 5V1h2l2 3z" fill="#999"/>`)}</button>
            <button aria-label="Status">${icon(gear("#777"))}</button>
            <button aria-label="Notifications">${icon(svg`<path d="M2 7.500V4.500Q2 2 5 2t3 2.500v3L9 8H1zM4 8.500h2v1H4z" fill="#777"/><circle cx="7.500" cy="2.500" r="1.800" fill="#ee8a4a"/>`)}</button>
            <button aria-label="Help">${icon(svg`<circle cx="5" cy="5" r="4" fill="#666"/><text x="5" y="7.300" text-anchor="middle" font-size="6" font-weight="700" font-family="Inter, sans-serif" fill="#eee">?</text>`)}</button>
            <button class="me" aria-label="Account">${icon(svg`<circle cx="7" cy="7" r="6.500" fill="#a9b8ce"/><circle cx="7" cy="5" r="2.700" fill="#33425e"/><path d="M2.500 11.500Q3 8 7 8t4.500 3.500Q7 15 2.500 11.500z" fill="#33425e"/>`, 14)}</button>
          </div>
        </div>
        <div class="main">
          <data-panel></data-panel>
          <div class="right">
            <fusion-ribbon></fusion-ribbon>
            <model-view></model-view>
            <div class="time">
              ${steps.map(([n, a]) => html`<button aria-label=${n}>${icon(a)}</button>`)}
              <span class="hist">${icon(svg`
                <path d="M0 1h50v2H0z" fill="#ee84e0"/>
                <path d="M6 18v2h40v-2M19 18v2M32 18v2" fill="none" stroke="#aaa" stroke-width=".8"/>
                ${[0, 14].map((d) => svg`<g transform="translate(${d} 0)"><path d="M2 6.500h7v8H2z" fill="#f6f9fb" stroke="#69abd8" stroke-width=".8"/><path d="M1 5.500h2v2H1zM8 5.500h2v2H8zM1 13.500h2v2H1z" fill="#3c87bd"/><path d="M5 14l5-5" stroke="#e98f42" stroke-width="1.300"/></g>`)}
                <path d="M28 7l2-2h6.500v7.500l-2 2H28z" fill="#2b8cd2"/><path d="M28 7h6.500v7.500" stroke="#8ec9ee" fill="none"/>
                <path d="M41 11l4-5h4v6l-3 3h-5z" fill="#9ba2a6" stroke="#666" stroke-width=".6"/><path d="M41 11l4-5q2 5-1 8z" fill="#62ade0"/>
                <path d="M49 2h6v3l-2 1.500V19h-1.500V6.500L49 5z" fill="#333"/>`, 56, 22)}</span>
              <button class="end" aria-label="Timeline settings">${icon(gear("#666"))}</button>
            </div>
            <div class="tc">${icon(line("M1 4h4", "#666"), 6, 8)}<label for="log">TEXT COMMANDS</label></div>
            <textarea id="log" readonly></textarea>
            <div class="cmd"><input class="in" aria-label="Command" placeholder="Type Text Commands Here - Type '?' For Help">
              ${["Txt", "Py", "Js"].map((m) => html`<label class=${classMap({ active: m === this.mode })}><input type="radio" name="lang" ?checked=${m === this.mode}>${m}</label>`)}</div>
          </div>
        </div>
      </div>
      <app-dock></app-dock>`;
  }
}
